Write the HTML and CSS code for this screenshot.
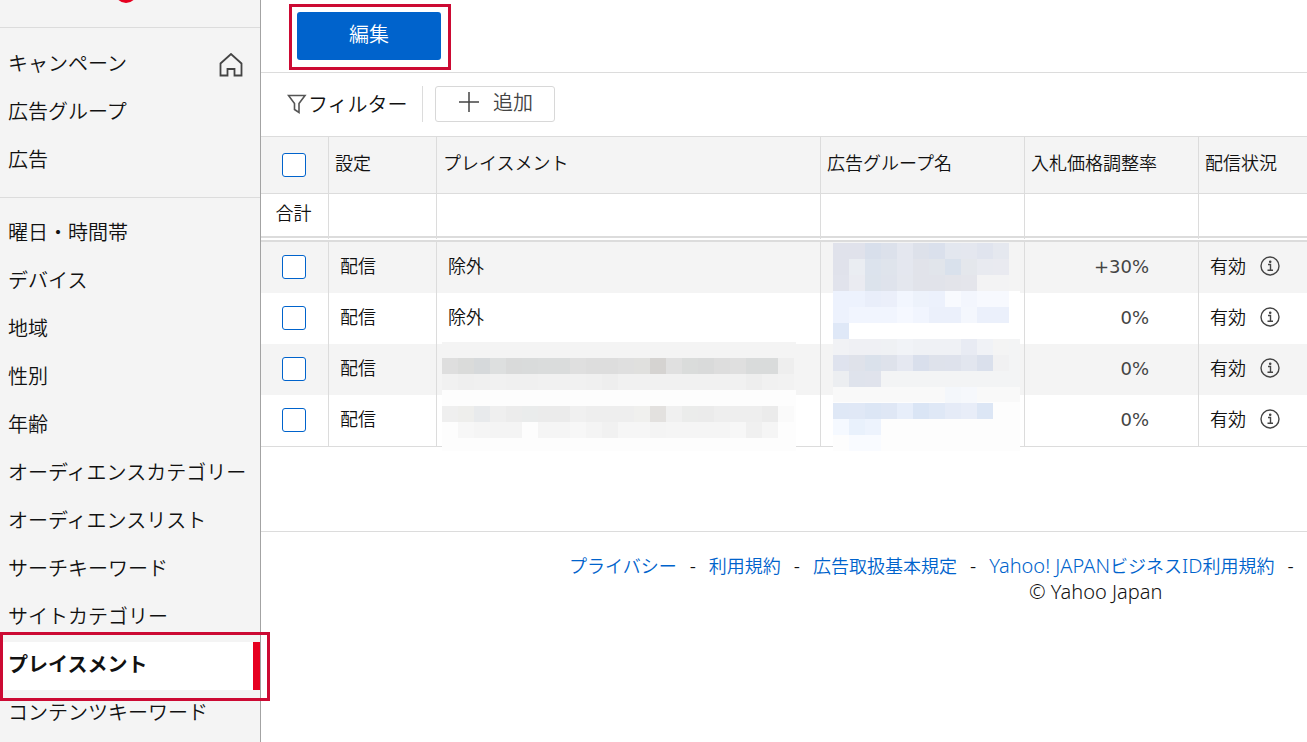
FILE: index.html
```html
<!DOCTYPE html>
<html lang="ja">
<head>
<meta charset="utf-8">
<title>プレイスメント</title>
<link rel="stylesheet" href="styles.css">
</head>
<body>
<div class="app">
  <aside class="sidebar">
    <div class="brand"><svg width="24" height="4" viewBox="0 0 24 4" aria-hidden="true"><circle cx="12" cy="-8" r="11" fill="#e60020"/></svg></div>
    <nav class="group">
      <a class="item" href="#">キャンペーン
        <svg class="home" width="24" height="24" viewBox="0 0 24 24" fill="none" stroke="#444" stroke-width="1.8" aria-hidden="true"><path d="M1.500 22.500V10.500L12 1L22.500 10.500V22.500H15.500V16H8.500V22.500Z"/></svg>
      </a>
      <a class="item" href="#">広告グループ</a>
      <a class="item" href="#">広告</a>
    </nav>
    <nav class="group">
      <a class="item" href="#">曜日・時間帯</a>
      <a class="item" href="#">デバイス</a>
      <a class="item" href="#">地域</a>
      <a class="item" href="#">性別</a>
      <a class="item" href="#">年齢</a>
      <a class="item" href="#">オーディエンスカテゴリー</a>
      <a class="item" href="#">オーディエンスリスト</a>
      <a class="item" href="#">サーチキーワード</a>
      <a class="item" href="#">サイトカテゴリー</a>
      <a class="item active" href="#">プレイスメント<span class="callout"></span></a>
      <a class="item" href="#">コンテンツキーワード</a>
    </nav>
  </aside>
  <main class="main">
    <div class="actions"><div class="edit-frame"><button class="edit">編集</button></div></div>
    <div class="filters">
      <div class="filter-label">
        <svg width="20" height="20" viewBox="0 0 20 20" fill="none" stroke="#555" stroke-width="1.600" aria-hidden="true"><path d="M1.500 1.500H18L12 9.500V18.500L7.500 15.500V9.500Z"/></svg>
        <span>フィルター</span>
      </div>
      <button class="add"><svg width="20" height="20" viewBox="0 0 20 20" stroke="#444" stroke-width="1.500" aria-hidden="true"><path d="M10 0V20M0 10H20"/></svg>追加</button>
    </div>
    <table class="grid">
      <colgroup><col class="c-check"><col class="c-set"><col class="c-place"><col class="c-group"><col class="c-bid"><col></colgroup>
      <thead>
        <tr class="head"><th><input type="checkbox" aria-label="すべて選択"></th><th>設定</th><th>プレイスメント</th><th>広告グループ名</th><th>入札価格調整率</th><th>配信状況</th></tr>
        <tr class="total"><td>合計</td><td></td><td></td><td></td><td></td><td></td></tr>
      </thead>
      <tbody id="rows"></tbody>
    </table>
    <footer class="footer">
      <div class="links"><a href="#">プライバシー</a><span>-</span><a href="#">利用規約</a><span>-</span><a href="#">広告取扱基本規定</a><span>-</span><a href="#"><span class="latin">Yahoo! JAPAN</span>ビジネス<span class="latin">ID</span>利用規約</a><span>-</span></div>
      <div class="copy latin">© Yahoo Japan</div>
    </footer>
  </main>
</div>
<script src="app.js"></script>
</body>
</html>
```
FILE: styles.css
```css
* { box-sizing: border-box; }
body { margin: 0; overflow: hidden; background: #fff; color: #111; font-family: "Noto Sans CJK JP", sans-serif; font-size: 18px; font-weight: 350; line-height: 24px; }
button { font: inherit; cursor: pointer; }
a { color: inherit; text-decoration: none; }
.app { display: flex; min-height: 100vh; }
.sidebar { flex: 0 0 261px; min-width: 0; background: #f4f4f4; border-right: 1px solid #a3a3a3; font-size: 20px; }
.brand { display: flex; height: 27px; padding-left: 114px; }
.group { border-top: 1px solid #dcdcdc; padding: 13px 0 12px; }
.group + .group { padding: 12px 0 0; }
.item { position: relative; display: flex; align-items: center; justify-content: space-between; height: 48px; padding: 0 17px 4px 8px; white-space: nowrap; }
.home { margin-top: 4px; }
.active { background: #fff; font-weight: 700; border-right: 7px solid #e60020; }
.callout { position: absolute; z-index: 2; top: -10px; bottom: -11px; left: 0; right: -17px; border: 3px solid #cc0a33; pointer-events: none; }
.main { flex: 1; min-width: 0; }
.actions { height: 73px; padding: 4px 0 0 28px; border-bottom: 1px solid #dcdcdc; }
.edit-frame { width: 162px; border: 3px solid #cc0a33; padding: 5px 7px 7px 5px; }
.edit { display: block; width: 100%; height: 48px; border: 0; border-radius: 3px; background: #0063cc; color: #fff; font-size: 20px; padding-bottom: 5px; }
.filters { display: flex; align-items: center; gap: 12px; height: 63px; padding: 0 0 2px 26px; font-size: 20px; }
.filter-label { display: flex; align-items: center; gap: 1px; height: 36px; padding-right: 14px; border-right: 1px solid #dcdcdc; }
.add { display: flex; align-items: center; justify-content: center; gap: 14px; width: 120px; height: 36px; border: 1px solid #d8d8d8; border-radius: 3px; background: #fff; color: #444; padding: 0 0 4px 3px; }
.grid { width: 100%; border-collapse: separate; border-spacing: 0; table-layout: fixed; }
.c-check { width: 68px; } .c-set { width: 108px; } .c-place { width: 384px; } .c-group { width: 204px; } .c-bid { width: 174px; }
th, td { position: relative; border-right: 1px solid #dcdcdc; padding: 0 11px 5px; text-align: left; font-weight: inherit; white-space: nowrap; }
th:last-child, td:last-child { border-right: 0; }
th { padding: 0 6px 6px; }
th:first-child { padding: 0; }
td:first-child { text-align: center; padding: 0 2px 2px 0; }
.head th { height: 58px; background: #f4f4f4; border-top: 1px solid #dcdcdc; border-bottom: 1px solid #dcdcdc; }
.head th:first-child { padding: 0; }
.total td { height: 48px; border-bottom: 6px double #dcdcdc; }
.total td:first-child { padding-bottom: 6px; }
tbody td { height: 51px; }
tbody tr:nth-child(odd) { background: #f4f4f4; }
tbody tr:last-child td { border-bottom: 1px solid #dcdcdc; height: 52px; }
td.num { text-align: right; padding: 0 49px 2px 0; color: #444; font-family: "DejaVu Sans", sans-serif; font-weight: 400; }
input[type=checkbox] { appearance: none; display: block; width: 24px; height: 24px; margin: 0 auto 0 21px; border: 1px solid #0063cc; border-radius: 3px; background: #fff; }
.status { display: flex; align-items: center; gap: 14px; }
.status svg { margin-top: 2px; }
.mosaic { position: absolute; z-index: 1; left: 12px; top: 1px; }
.mosaic.mosaic-place { left: 5px; top: -2px; }
.footer { margin-top: 84px; padding: 21px 0 0 308px; border-top: 1px solid #dcdcdc; white-space: nowrap; overflow: hidden; }
.footer a { color: #0063cc; }
.links, .copy { height: 27px; }
.links { display: flex; gap: 13px; }
.latin { font-family: "Noto Sans", sans-serif; font-size: 20px; }
.copy { padding-left: 460px; }
```
FILE: app.js
```js
const rows = [["除外", "+30%"], ["除外", "0%"], ["", "0%"], ["", "0%"]];

// Each mosaic has a soft backdrop plus 16px tiles; "." leaves the backdrop visible.
const mosaics = {
  group: {
    w: 187, h: 208,
    back: [[0, 0, 176, 48, "#ededf2"], [0, 48, 187, 48, "#ffffff"], [0, 96, 187, 48, "#f3f4f5"], [0, 144, 187, 15, "#f9f9f9"], [0, 159, 187, 49, "#fdfdfd"]],
    tiles: [
      "e0e2eb e0e2eb d8dfeb dce1eb e4e7ef dde1ea dae0ec e3e7ef e4e7ef e0e4ee e5e8ef",
      "e0e2eb eaedf2 dce3ed dfe4ec e4e7ef e1e3ea e1e5eb d9e1ec e4e7ec e8eaf0 e9eaf0",
      "e1e3ec eaebf1 dce3ec dfe3ec e4e7ee e1e3ea e1e3ea e3e4ea e4e5eb f3f3f4 f3f3f4",
      "edf2fd edf2fd e9eefa ebeffa f2f6fe edf2fb ecf1fc f8fafe f3f6fd f7f9fe f7f9fe",
      "edf2fd f1f5fe f1f5fe f1f5fe f5f8ff f1f5fe ebf0fb ebf0fb f4f7fd ebf0fb ebf0fb",
      "dfe8f7 . . . . . . . . . .",
      "f1f2f5 eff0f4 eff0f4 eff1f4 f1f3f7 eff1f5 eff1f5 eff1f5 e8ebf3 f0f2f6 f4f4f4",
      "dfe3ee dfe2ea dae1eb dee2eb e5e8f1 d9dfec dee2eb dee2ec e2e6ef dae0ec f1f1f2",
      "eceef1 dfe3ec e0e3ec . . . . . . . .",
      ". . . . . . . f4f7fb f6f8fc . .",
      "dfe8f6 e0e8f6 dce6f5 dfe7f5 e7eefa dae5f5 dfe8f6 e5ebf7 e8edf8 dce6f5 .",
      "f5f9ff e9f1fc edf3fd . . . . . . . .",
      ". f9fbff f9fbff . . . . . . . ."
    ]
  },
  place: {
    w: 354, h: 109,
    back: [[0, 0, 354, 48, "#f4f4f4"], [0, 48, 354, 61, "#fdfdfd"]],
    tiles: [
      "",
      "dedede dadbda d6d9db dddfdf d9dada d9dbdb dadcdc dadcdc dfdfdf dddddd dddddd dfdfdf e0e0de d5d3d1 e0e0e0 dadcdb d9dada dddddd dfdfdf d9dbdb d9dbdb eeeeee",
      "f1f1f1 efefef f0f0f0 f1f1f1 f0f0f0 f0f0f0 f1f1f1 f1f1f1 f1f1f1 f0f0f0 eeeeee f1f1f1 f1f1f1 f1f1f1 f1f1f1 f1f1f1 f1f1f1 f1f1f1 f1f1f1 eeeeee f1f1f1 f2f2f2",
      "",
      "efefef eeeeec e8eaec efefef ececec eaecec ebebeb ebebeb f0f0f0 eeeeee eeeeee eeeeee f0f0ee e3e1df f0f0f0 ebeceb ebebeb eeeeee eeeeee eeeeee ebebeb fafafa",
      ". f7f7f7 f5f5f5 f4f4f4 f4f4f4 . f5f5f5 f5f5f5 f7f7f7 f4f4f4 f1f1f1 f6f6f6 f6f6f6 f4f4f4 f5f5f5 f5f5f5 f5f5f5 f5f5f5 f7f7f7 f0f0f0 f5f5f5 ."
    ]
  }
};

function mosaic(name) {
  const m = mosaics[name];
  const back = m.back.map(([x, y, w, h, c]) => `<rect x="${x}" y="${y}" width="${w}" height="${h}" fill="${c}"/>`);
  const tiles = m.tiles.flatMap((line, r) => line.split(" ").map((c, i) =>
    c && c !== "." ? `<rect x="${i * 16}" y="${r * 16}" width="16" height="16" fill="#${c}"/>` : ""));
  return `<svg class="mosaic mosaic-${name}" width="${m.w}" height="${m.h}" shape-rendering="crispEdges" aria-hidden="true">${back.join("")}${tiles.join("")}</svg>`;
}

const info = `<svg width="20" height="20" viewBox="0 0 20 20" fill="none" stroke="#444" stroke-width="1.4" aria-hidden="true"><circle cx="10" cy="10" r="9"/><path d="M8 8.500H10.500V14M7.500 14.200H13"/><circle cx="10.200" cy="5.800" r=".6" fill="#444"/></svg>`;

document.getElementById("rows").innerHTML = rows.map(([place, bid], i) => `<tr>
  <td><input type="checkbox" aria-label="行${i + 1}を選択"></td>
  <td>配信</td>
  <td>${place}${i === 2 ? mosaic("place") : ""}</td>
  <td>${i === 0 ? mosaic("group") : ""}</td>
  <td class="num">${bid}</td>
  <td><span class="status">有効${info}</span></td>
</tr>`).join("");
```
